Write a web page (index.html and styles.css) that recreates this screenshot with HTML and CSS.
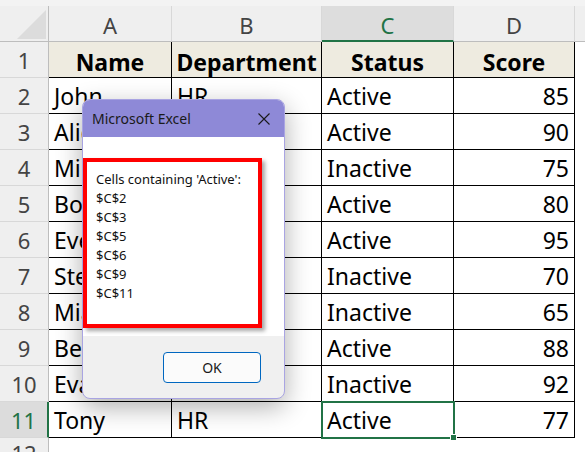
FILE: index.html
```html
<!DOCTYPE html>
<html lang="en">
<head>
<meta charset="utf-8">
<title>Book1 - Excel</title>
<link rel="stylesheet" href="styles.css">
</head>
<body>
<div class="sheet">
  <div class="top-strip"></div>
  <div class="grid">
    <div class="corner"><span class="corner-tri"></span></div>
    <div class="col-head">A</div>
    <div class="col-head">B</div>
    <div class="col-head col-head--active">C</div>
    <div class="col-head">D</div>
    <div class="col-head col-head--blank"></div>

    <div class="row-head">1</div>
    <div class="cell cell--title">Name</div>
    <div class="cell cell--title">Department</div>
    <div class="cell cell--title">Status</div>
    <div class="cell cell--title">Score</div>
    <div class="blank"></div>

    <div class="row-head">2</div>
    <div class="cell">John</div>
    <div class="cell">HR</div>
    <div class="cell">Active</div>
    <div class="cell cell--num">85</div>
    <div class="blank"></div>

    <div class="row-head">3</div>
    <div class="cell">Alice</div>
    <div class="cell">IT</div>
    <div class="cell">Active</div>
    <div class="cell cell--num">90</div>
    <div class="blank"></div>

    <div class="row-head">4</div>
    <div class="cell">Mike</div>
    <div class="cell">Sales</div>
    <div class="cell">Inactive</div>
    <div class="cell cell--num">75</div>
    <div class="blank"></div>

    <div class="row-head">5</div>
    <div class="cell">Bob</div>
    <div class="cell">IT</div>
    <div class="cell">Active</div>
    <div class="cell cell--num">80</div>
    <div class="blank"></div>

    <div class="row-head">6</div>
    <div class="cell">Eve</div>
    <div class="cell">HR</div>
    <div class="cell">Active</div>
    <div class="cell cell--num">95</div>
    <div class="blank"></div>

    <div class="row-head">7</div>
    <div class="cell">Steve</div>
    <div class="cell">Sales</div>
    <div class="cell">Inactive</div>
    <div class="cell cell--num">70</div>
    <div class="blank"></div>

    <div class="row-head">8</div>
    <div class="cell">Mia</div>
    <div class="cell">IT</div>
    <div class="cell">Inactive</div>
    <div class="cell cell--num">65</div>
    <div class="blank"></div>

    <div class="row-head">9</div>
    <div class="cell">Ben</div>
    <div class="cell">Sales</div>
    <div class="cell">Active</div>
    <div class="cell cell--num">88</div>
    <div class="blank"></div>

    <div class="row-head">10</div>
    <div class="cell">Eva</div>
    <div class="cell">IT</div>
    <div class="cell">Inactive</div>
    <div class="cell cell--num">92</div>
    <div class="blank"></div>

    <div class="row-head row-head--active">11</div>
    <div class="cell">Tony</div>
    <div class="cell">HR</div>
    <div class="cell cell--selected">Active<span class="fill-handle"></span></div>
    <div class="cell cell--num">77</div>
    <div class="blank"></div>

    <div class="row-head row-head--last">12</div>
    <div class="blank"></div>
    <div class="blank"></div>
    <div class="blank"></div>
    <div class="blank"></div>
    <div class="blank"></div>
  </div>

  <div class="dialog">
    <div class="dialog-title">
      <span class="dialog-caption">Microsoft Excel</span>
      <svg class="dialog-close" width="12" height="12" viewBox="0 0 12 12">
        <path d="M0.5 0.5 L11.5 11.5 M11.5 0.5 L0.5 11.5" stroke="#1a1a1a" stroke-width="1.1" fill="none"/>
      </svg>
    </div>
    <div class="dialog-body">
      <div class="dialog-message">
        <div>Cells containing 'Active':</div>
        <div>$C$2</div>
        <div>$C$3</div>
        <div>$C$5</div>
        <div>$C$6</div>
        <div>$C$9</div>
        <div>$C$11</div>
      </div>
    </div>
    <div class="dialog-footer">
      <button class="dialog-btn">OK</button>
    </div>
    <div class="highlight-box"></div>
  </div>
</div>
</body>
</html>
```

FILE: styles.css
```css
html, body {
  margin: 0;
  padding: 0;
  background: #ffffff;
  overflow: hidden;
}

.sheet {
  position: relative;
  width: 585px;
  height: 452px;
  overflow: hidden;
  font-family: "Noto Sans", "Open Sans", sans-serif;
}

.top-strip {
  height: 6px;
  background: #f3f3f3;
}

.grid {
  display: grid;
  grid-template-columns: 49px 123px 150px 132px 121px 1fr;
  grid-template-rows: 36px repeat(11, 36px) 14px;
}

/* header band */
.corner {
  position: relative;
  background: #efefef;
  border-right: 1px solid #bdbdbd;
  border-bottom: 1px solid #bdbdbd;
  box-sizing: border-box;
}
.corner-tri {
  position: absolute;
  right: 2px;
  bottom: 2px;
  width: 0;
  height: 0;
  border-left: 29px solid transparent;
  border-bottom: 29px solid #dcdcdc;
}

.col-head {
  display: flex;
  align-items: center;
  justify-content: center;
  background: #efefef;
  color: #444444;
  font-size: 22px;
  border-right: 1px solid #d8d8d8;
  border-bottom: 1px solid #bdbdbd;
  box-sizing: border-box;
  padding-top: 3px;
}
.col-head--active {
  background: #dddddd;
  color: #217346;
  border-bottom: 2px solid #217346;
}
.col-head--blank {
  border-right: none;
}

.row-head {
  display: flex;
  align-items: center;
  justify-content: center;
  background: #efefef;
  color: #444444;
  font-size: 22px;
  border-right: 1px solid #bdbdbd;
  border-bottom: 1px solid #d8d8d8;
  box-sizing: border-box;
}
.row-head--active {
  background: #dcdcdc;
  color: #217346;
  border-right: 2px solid #217346;
}
.row-head--last {
  align-items: flex-start;
  padding-top: 4px;
  border-bottom: none;
  line-height: 1;
  overflow: hidden;
}

/* data cells */
.cell {
  position: relative;
  display: flex;
  align-items: center;
  padding: 1px 5px 0 5px;
  font-size: 23px;
  color: #000000;
  background: #ffffff;
  border-right: 1px solid #000000;
  border-bottom: 1px solid #000000;
  box-sizing: border-box;
  white-space: nowrap;
  overflow: hidden;
}
.cell--title {
  justify-content: center;
  font-weight: 700;
  background: #eeebe0;
  padding-top: 4px;
}
.cell--num {
  justify-content: flex-end;
}
.cell--selected {
  overflow: visible;
  outline: 2px solid #217346;
  outline-offset: -1px;
  z-index: 1;
}
.fill-handle {
  position: absolute;
  right: -4px;
  bottom: -4px;
  width: 5px;
  height: 5px;
  background: #217346;
  border: 1px solid #ffffff;
}

.blank {
  background: #ffffff;
}

/* message box */
.dialog {
  position: absolute;
  left: 82px;
  top: 99px;
  width: 203px;
  height: 300px;
  box-sizing: border-box;
  display: flex;
  flex-direction: column;
  border: 1px solid #a9a4e2;
  border-radius: 8px;
  overflow: visible;
  background: #f0f0f0;
  box-shadow: 0 8px 26px rgba(0, 0, 0, 0.32);
  font-family: "Noto Sans", "Open Sans", sans-serif;
  z-index: 5;
}
.dialog-title {
  height: 37px;
  flex: none;
  display: flex;
  align-items: center;
  justify-content: space-between;
  padding: 0 14px 0 9px;
  background: #8e89d7;
  border-radius: 7px 7px 0 0;
}
.dialog-caption {
  font-size: 14px;
  color: #1a1a1a;
}
.dialog-body {
  height: 199px;
  flex: none;
  background: #ffffff;
}
.dialog-message {
  padding: 33px 0 0 13px;
  font-size: 13px;
  line-height: 19px;
  color: #111111;
}
.dialog-footer {
  flex: 1;
  display: flex;
  justify-content: flex-end;
  align-items: flex-start;
  padding: 16px 23px 0 0;
  border-radius: 0 0 7px 7px;
}
.dialog-btn {
  width: 98px;
  height: 31px;
  border: 1px solid #0067c0;
  border-radius: 4px;
  background: #fbfbfb;
  font-family: "Noto Sans", "Open Sans", sans-serif;
  font-size: 14px;
  color: #1a1a1a;
  padding: 0;
}

/* annotation frame around the message text */
.highlight-box {
  position: absolute;
  left: 0;
  top: 58px;
  width: 179px;
  height: 170px;
  box-sizing: border-box;
  border: 4px solid #ff0000;
  box-shadow: 3px 3px 4px rgba(0, 0, 0, 0.35);
}
```
